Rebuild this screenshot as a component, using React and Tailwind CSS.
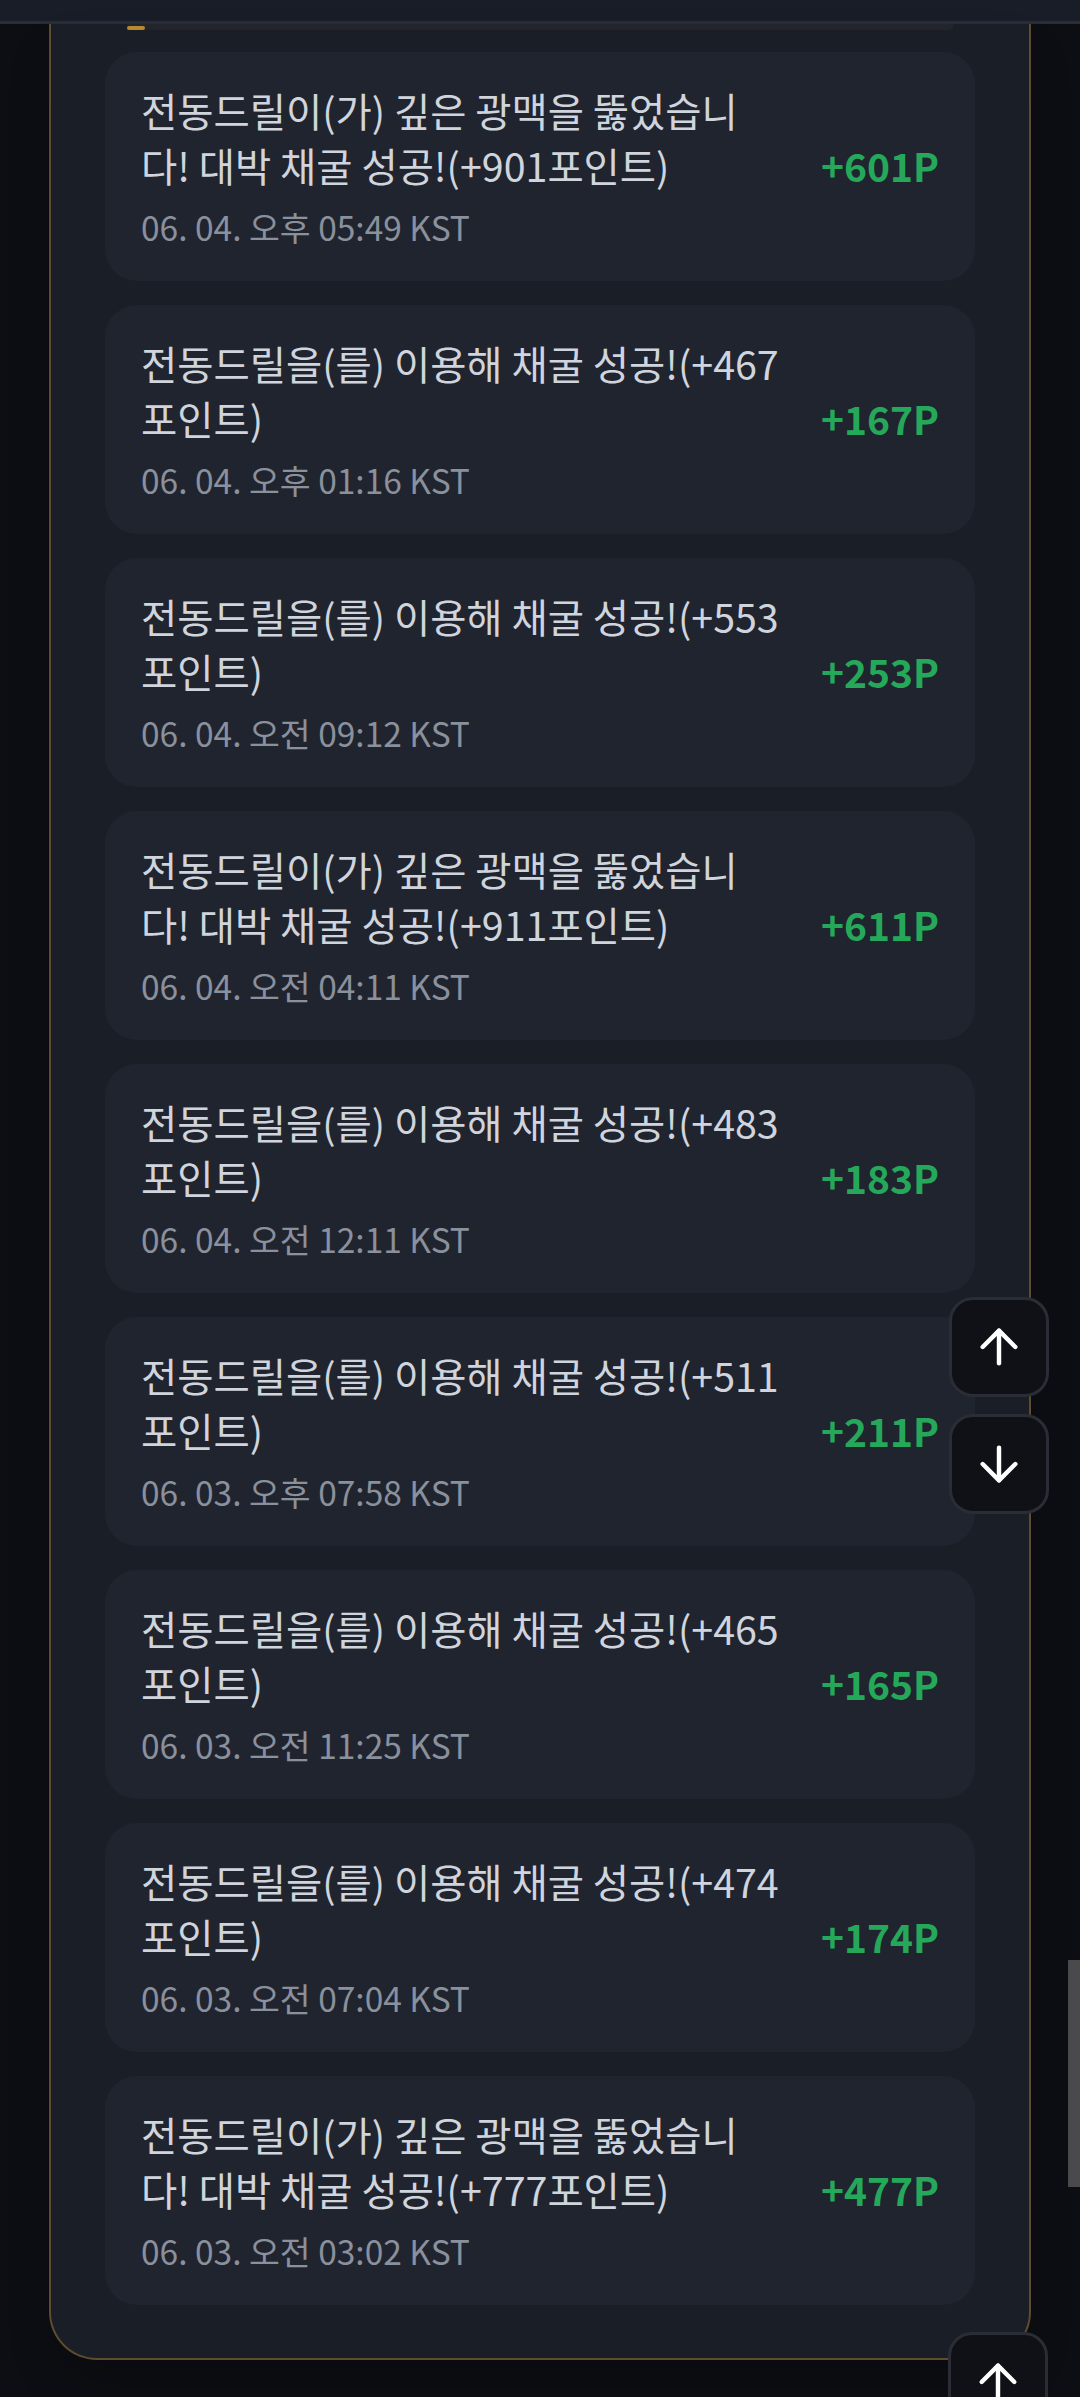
import React from 'react'
import { ArrowDown, ArrowUp } from 'lucide-react'

const DEEP = '전동드릴이(가) 깊은 광맥을 뚫었습니다! 대박 채굴 성공!'
const NORMAL = '전동드릴을(를) 이용해 채굴 성공!'

const logs = [
  { text: DEEP, bonus: 901, points: 601, time: '06. 04. 오후 05:49 KST' },
  { text: NORMAL, bonus: 467, points: 167, time: '06. 04. 오후 01:16 KST' },
  { text: NORMAL, bonus: 553, points: 253, time: '06. 04. 오전 09:12 KST' },
  { text: DEEP, bonus: 911, points: 611, time: '06. 04. 오전 04:11 KST' },
  { text: NORMAL, bonus: 483, points: 183, time: '06. 04. 오전 12:11 KST' },
  { text: NORMAL, bonus: 511, points: 211, time: '06. 03. 오후 07:58 KST' },
  { text: NORMAL, bonus: 465, points: 165, time: '06. 03. 오전 11:25 KST' },
  { text: NORMAL, bonus: 474, points: 174, time: '06. 03. 오전 07:04 KST' },
  { text: DEEP, bonus: 777, points: 477, time: '06. 03. 오전 03:02 KST' },
]

const LogCard = ({ log }) => (
  <div className="flex items-center rounded-[32px] bg-[#20242f] pl-[36px] pr-[36px] pt-[30px] pb-[32px]">
    <div className="w-[640px] shrink-0">
      <p className="text-[39.4px] leading-[55px] text-[#d0d4dc]">
        {log.text}(+{log.bonus}포인트)
      </p>
      <p className="mt-[13px] text-[33.5px] leading-[44px] text-[#8a909c]">{log.time}</p>
    </div>
    <span className="ml-auto text-[39px] font-bold text-[#25a85a]">+{log.points}P</span>
  </div>
)

const FloatButton = ({ children, className }) => (
  <button
    type="button"
    className={`absolute flex h-[100px] w-[100px] items-center justify-center rounded-[24px] border-[3px] border-[#2a2d35] bg-[#0f1117] text-white ${className}`}
  >
    {children}
  </button>
)

export default function App() {
  return (
    <div
      className="relative h-[2397px] w-[1080px] overflow-hidden bg-[#0c0e13]"
      style={{ fontFamily: '"Noto Sans CJK KR", "Noto Sans", sans-serif' }}
    >
      <div className="h-[24px] border-b-[3px] border-[#272d39] bg-[#191d27]" />

      <div className="mx-[49px] rounded-b-[48px] border-x-2 border-b-2 border-[#5e4c2e] bg-[#1a1e27] px-[54px] pb-[53px] shadow-2xl">
        <div className="mx-auto flex h-[6px] w-[827px] items-end rounded-b-[6px] bg-[#24252b]">
          <span className="h-[4px] w-[18px] rounded-full bg-[#b8892e]" />
        </div>

        <div className="mt-[22px] flex flex-col gap-[24px]">
          {logs.map((log) => (
            <LogCard key={log.time} log={log} />
          ))}
        </div>
      </div>

      <FloatButton className="left-[949px] top-[1297px]">
        <ArrowUp size={56} strokeWidth={1.9} />
      </FloatButton>
      <FloatButton className="left-[949px] top-[1414px]">
        <ArrowDown size={56} strokeWidth={1.9} />
      </FloatButton>
      <FloatButton className="left-[948px] top-[2332px]">
        <ArrowUp size={56} strokeWidth={1.9} />
      </FloatButton>

      <div className="absolute right-0 top-[1960px] h-[227px] w-[12px] bg-[#4a4a4d]" />
    </div>
  )
}
